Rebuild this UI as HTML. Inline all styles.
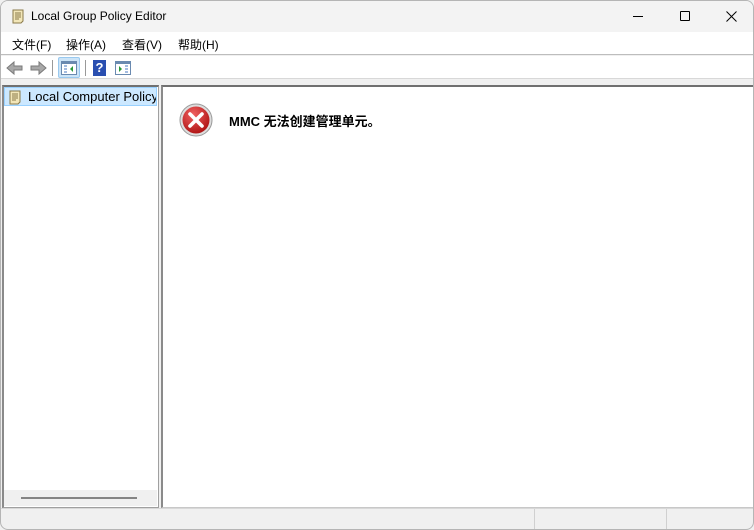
<!DOCTYPE html><html><head><meta charset="utf-8"><style>
*{margin:0;padding:0;box-sizing:border-box}
body{width:754px;height:530px;overflow:hidden;background:#f0f0f0;font-family:"Segoe UI","Liberation Sans","Noto Sans CJK SC",sans-serif;font-size:12px;color:#000;position:relative}
.a{position:absolute}
</style></head><body>
<div class="a" style="left:0;top:0;width:754px;height:530px;border:1px solid #b5b5b5;border-radius:8px;overflow:hidden;background:#f0f0f0">
<div class="a" style="left:0;top:0;width:754px;height:31px;background:#f3f3f3"></div>
<svg class="a" style="left:9px;top:7px" width="16" height="16" viewBox="0 0 16 16"><path d="M3 2h10v11l-2 2H3V4z" fill="#f2e6b8" stroke="#8a7a4a"/><path d="M5 5h6M5 7h6M5 9h6M5 11h4" stroke="#8a7a4a"/></svg>
<div class="a" style="left:30px;top:8px;font-size:12px">Local Group Policy Editor</div>
<div class="a" style="left:632px;top:15px;width:10px;height:1px;background:#000"></div>
<div class="a" style="left:679px;top:10px;width:10px;height:10px;border:1px solid #000;border-radius:1px"></div>
<svg class="a" style="left:725px;top:10px" width="11" height="11"><path d="M0.5 0.5l10 10M10.5 0.5l-10 10" stroke="#000"/></svg>
<div class="a" style="left:0;top:31px;width:754px;height:23px;background:#fff;border-bottom:1px solid #bdbdbd"></div>
<div class="a" style="left:11px;top:35px">文件(F)</div>
<div class="a" style="left:65px;top:35px">操作(A)</div>
<div class="a" style="left:121px;top:35px">查看(V)</div>
<div class="a" style="left:177px;top:35px">帮助(H)</div>
<div class="a" style="left:0;top:55px;width:754px;height:23px;background:#fff;border-bottom:1px solid #d8d8d8"></div>
<svg class="a" style="left:5px;top:59px" width="42" height="16"><path d="M1 8l7-6v4h8v4H8v4z" fill="#a8a8a8" stroke="#7a7a7a"/><path d="M40 8l-7-6v4h-8v4h8v4z" fill="#a8a8a8" stroke="#7a7a7a"/></svg>
<div class="a" style="left:51px;top:59px;width:1px;height:16px;background:#999"></div>
<div class="a" style="left:57px;top:56px;width:22px;height:21px;background:#cce4f7;border:1px solid #99c9ef;border-radius:2px"></div>
<svg class="a" style="left:60px;top:60px" width="16" height="14"><rect x=".5" y=".5" width="15" height="13" fill="#fff" stroke="#6a8ab0"/><rect x="1" y="1" width="14" height="2" fill="#6a8ab0"/><path d="M3 5h3M3 8h3M3 11h3" stroke="#4a7ac0"/><path d="M12 5v6l-3-3z" fill="#2a9a3a"/></svg>
<div class="a" style="left:84px;top:59px;width:1px;height:16px;background:#999"></div>
<div class="a" style="left:92px;top:59px;width:13px;height:16px;background:#2a4fb0;color:#fff;font-weight:bold;font-size:13px;text-align:center;line-height:16px">?</div>
<svg class="a" style="left:114px;top:60px" width="16" height="14"><rect x=".5" y=".5" width="15" height="13" fill="#fff" stroke="#6a8ab0"/><rect x="1" y="1" width="14" height="2" fill="#6a8ab0"/><path d="M10 5h3M10 8h3M10 11h3" stroke="#4a7ac0"/><path d="M4 5v6l3-3z" fill="#2a9a3a"/></svg>
<div class="a" style="left:1px;top:84px;width:157px;height:423px;background:#fff;border:1px solid #a0a0a0;border-top:2px solid #707070;border-left:2px solid #8a8a8a"></div>
<div class="a" style="left:3px;top:86px;width:153px;height:19px;background:#cce8ff;border:1px solid #99d1ff"></div>
<svg class="a" style="left:6px;top:88px" width="16" height="16" viewBox="0 0 16 16"><path d="M3 2h10v11l-2 2H3V4z" fill="#f2e6b8" stroke="#8a7a4a"/><path d="M5 5h6M5 7h6M5 9h6M5 11h4" stroke="#8a7a4a"/></svg>
<div class="a" style="left:27px;top:88px;font-size:13px;white-space:nowrap;width:128px;overflow:hidden">Local Computer Policy</div>
<div class="a" style="left:3px;top:489px;width:153px;height:16px;background:#f0f0f0"></div>
<div class="a" style="left:20px;top:496px;width:116px;height:2px;background:#858585"></div>
<div class="a" style="left:160px;top:84px;width:593px;height:423px;background:#fff;border:1px solid #c8c8c8;border-top:2px solid #707070;border-left:2px solid #8a8a8a"></div>
<svg class="a" style="left:178px;top:102px" width="34" height="34"><defs><radialGradient id="g" cx=".4" cy=".3" r=".8"><stop offset="0" stop-color="#f06060"/><stop offset="1" stop-color="#a80c0c"/></radialGradient></defs><circle cx="17" cy="17" r="16" fill="#ddd" stroke="#999"/><circle cx="17" cy="17" r="13.5" fill="url(#g)"/><path d="M11 11l12 12M23 11l-12 12" stroke="#fff" stroke-width="3.6" stroke-linecap="round"/></svg>
<div class="a" style="left:228px;top:110px;font-weight:bold;font-size:13px">MMC 无法创建管理单元。</div>
<div class="a" style="left:0;top:507px;width:754px;height:1px;background:#d8d8d8"></div>
<div class="a" style="left:533px;top:508px;width:1px;height:20px;background:#d0d0d0"></div>
<div class="a" style="left:665px;top:508px;width:1px;height:20px;background:#d0d0d0"></div>
</div>
</body></html>
